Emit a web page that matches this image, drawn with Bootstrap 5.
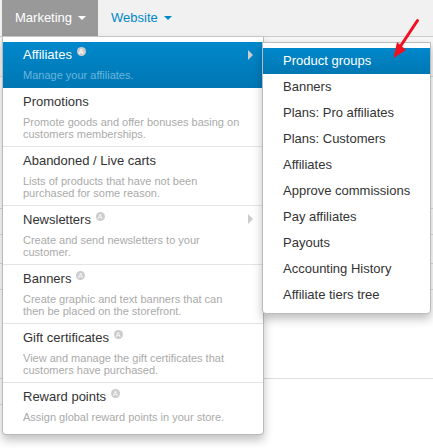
<!DOCTYPE html>
<html lang="en">
<head>
    <meta charset="UTF-8">
    <title>Marketing menu</title>
    <link href="https://cdn.jsdelivr.net/npm/bootstrap@5.3.0/dist/css/bootstrap.min.css" rel="stylesheet">
    <style>
        html, body { height: 448px; overflow: hidden; }
        body { font-family: "Liberation Sans", Arial, sans-serif; font-size: 13px; color: #333; background: #fff; position: relative; }

        .top-bar { height: 37px; background: #f1f1f1; border-bottom: 1px solid #ccc; padding-left: 2px; }
        .top-tab { height: 36px; line-height: 35px; padding: 0 13px; font-size: 13px; color: #08c; text-decoration: none; white-space: nowrap; }
        .top-tab.is-open { background: #999; color: #fff; width: 96px; }
        .tab-caret { display: inline-block; width: 0; height: 0; margin-left: 6px; vertical-align: 2px; border-top: 4px solid currentColor; border-left: 4px solid transparent; border-right: 4px solid transparent; }

        /* page behind the menus */
        .page-back { height: 411px; }
        .page-head { height: 40px; background: #f7f7f7; border-bottom: 1px solid #ddd; }
        .bg-rule { height: 1px; background: #ddd; }
        .gap-132 { height: 131px; }
        .gap-25 { height: 25px; }
        .gap-28 { height: 28px; }
        .gap-88 { height: 88px; }
        .bg-rule-short { width: 200px; }

        .main-menu { position: absolute; left: 2px; top: 37px; width: 262px; background: #fff; border: 1px solid #bbb; border-top: 0; border-radius: 0 0 4px 4px; box-shadow: 0 5px 10px rgba(0,0,0,.25); padding-top: 5px; }
        .main-item { display: block; position: relative; padding: 5px 20px 0 20px; border-bottom: 1px solid #e4e4e4; text-decoration: none; color: #333; height: 59px; }
        .main-item:last-child { border-bottom: 0; height: 51px; }
        .main-item.is-active { height: 46px; padding-top: 4px; background: linear-gradient(#08c, #0077b3); color: #fff; border-bottom: 0; }
        .item-name { font-size: 13px; line-height: 18px; color: #333; display: block; }
        .is-active .item-name { color: #fff; }
        .item-desc { display: block; margin-top: 5px; font-size: 11px; line-height: 12px; color: #aaa; }
        .is-active .item-desc { color: #6bb6dd; }
        .adv-mark { display: inline-block; width: 9px; height: 9px; line-height: 9px; border-radius: 50%; background: #ccc; color: #fff; font-size: 7px; text-align: center; vertical-align: 5px; margin-left: 1px; }
        .sub-arrow { position: absolute; right: 10px; top: 8px; width: 0; height: 0; border-left: 5px solid #ccc; border-top: 5px solid transparent; border-bottom: 5px solid transparent; }

        .sub-menu { position: absolute; left: 262px; top: 42px; width: 169px; background: #fff; border: 1px solid #bbb; border-radius: 0 0 4px 4px; box-shadow: 0 5px 10px rgba(0,0,0,.25); padding: 5px 0; }
        .sub-item { display: block; height: 26px; line-height: 26px; padding-left: 20px; font-size: 13px; color: #333; text-decoration: none; white-space: nowrap; }
        .sub-item.is-active { background: linear-gradient(#08c, #0077b3); color: #fff; }

        .red-arrow { position: absolute; left: 385px; top: 10px; }
    </style>
</head>
<body>
    <!-- Top bar -->
    <div class="top-bar d-flex">
        <a class="top-tab is-open" href="#">Marketing<span class="tab-caret"></span></a>
        <a class="top-tab" href="#">Website<span class="tab-caret"></span></a>
    </div>

    <!-- Page rows behind the menus -->
    <div class="page-back">
        <div class="page-head"></div>
        <div class="gap-132"></div>
        <div class="bg-rule"></div>
        <div class="gap-25"></div>
        <div class="bg-rule"></div>
        <div class="gap-28"></div>
        <div class="bg-rule"></div>
        <div class="gap-25"></div>
        <div class="bg-rule"></div>
        <div class="gap-88"></div>
        <div class="bg-rule"></div>
        <div class="gap-25"></div>
        <div class="bg-rule bg-rule-short"></div>
    </div>

    <!-- Main dropdown -->
    <div class="main-menu">
        <a class="main-item is-active" href="#"><span class="item-name">Affiliates <span class="adv-mark">A</span></span><span class="item-desc">Manage your affiliates.</span><span class="sub-arrow"></span></a>
        <a class="main-item" href="#"><span class="item-name">Promotions</span><span class="item-desc">Promote goods and offer bonuses basing on customers memberships.</span></a>
        <a class="main-item" href="#"><span class="item-name">Abandoned / Live carts</span><span class="item-desc">Lists of products that have not been purchased for some reason.</span></a>
        <a class="main-item" href="#"><span class="item-name">Newsletters <span class="adv-mark">A</span></span><span class="item-desc">Create and send newsletters to your customer.</span><span class="sub-arrow"></span></a>
        <a class="main-item" href="#"><span class="item-name">Banners <span class="adv-mark">A</span></span><span class="item-desc">Create graphic and text banners that can then be placed on the storefront.</span></a>
        <a class="main-item" href="#"><span class="item-name">Gift certificates <span class="adv-mark">A</span></span><span class="item-desc">View and manage the gift certificates that customers have purchased.</span></a>
        <a class="main-item" href="#"><span class="item-name">Reward points <span class="adv-mark">A</span></span><span class="item-desc">Assign global reward points in your store.</span></a>
    </div>

    <!-- Submenu -->
    <div class="sub-menu">
        <a class="sub-item is-active" href="#">Product groups</a>
        <a class="sub-item" href="#">Banners</a>
        <a class="sub-item" href="#">Plans: Pro affiliates</a>
        <a class="sub-item" href="#">Plans: Customers</a>
        <a class="sub-item" href="#">Affiliates</a>
        <a class="sub-item" href="#">Approve commissions</a>
        <a class="sub-item" href="#">Pay affiliates</a>
        <a class="sub-item" href="#">Payouts</a>
        <a class="sub-item" href="#">Accounting History</a>
        <a class="sub-item" href="#">Affiliate tiers tree</a>
    </div>

    <!-- Annotation arrow -->
    <svg class="red-arrow" width="40" height="54" viewBox="0 0 40 54">
        <path d="M32.5 10.5 L15 37" stroke="#f01020" stroke-width="3" stroke-linecap="round" fill="none"/>
        <path d="M8.5 48 L12 32 L21 40 Z" fill="#f01020"/>
    </svg>
</body>
</html>
